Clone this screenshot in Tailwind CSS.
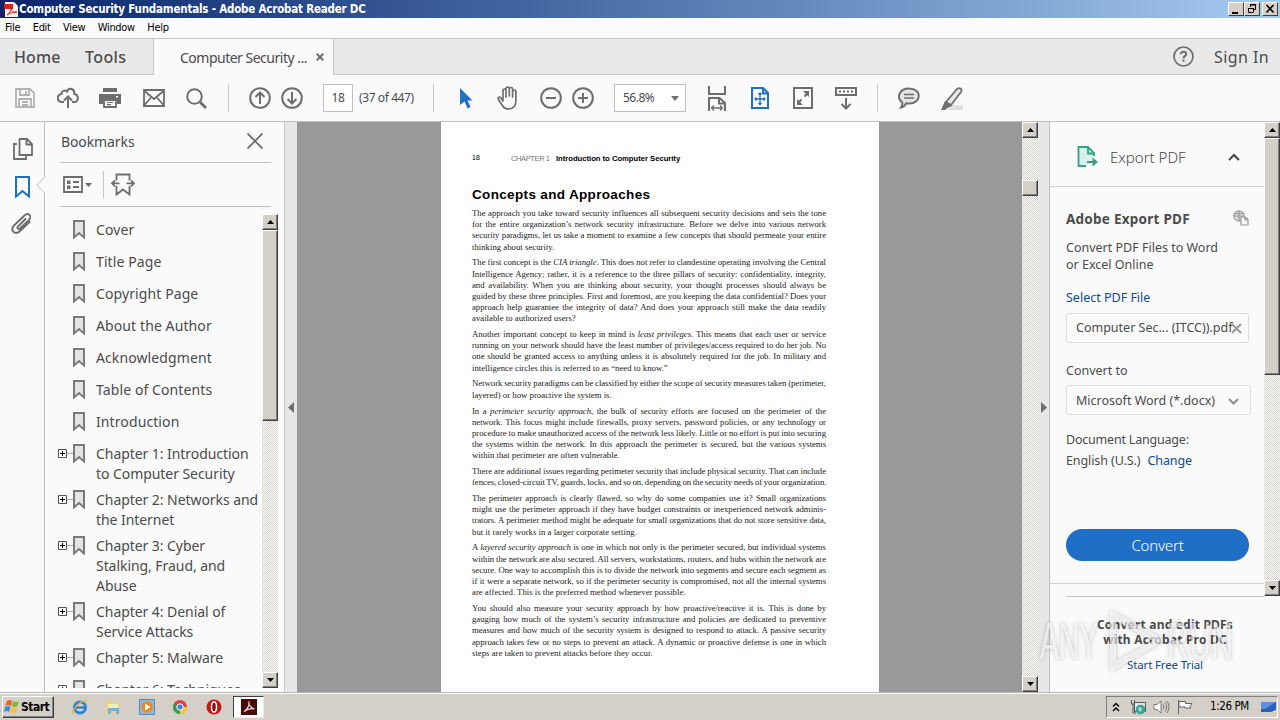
<!DOCTYPE html>
<html lang="en">
<head>
    <meta charset="UTF-8">
    <meta name="viewport" content="width=device-width, initial-scale=1.0">
    <title>Computer Security Fundamentals - Adobe Acrobat Reader DC</title>
    <script src="https://cdn.jsdelivr.net/npm/@tailwindcss/browser@4"></script>
</head>
<body class="w-[1280px] h-[720px] overflow-hidden flex flex-col bg-[#fafafa] font-['Noto_Sans',sans-serif] text-[#4b4b4b]">

    <!-- title bar -->
    <header class="h-[18px] shrink-0 flex items-center bg-linear-to-r from-[#0a246a] to-[#a6caf0] pl-1 pr-[2px]">
        <svg class="w-[14px] h-4" viewBox="0 0 14 16"><path d="M1 1h9l4 4v11H1z" fill="#f4f0f0"/><path d="M0 3h9v5H0z" fill="#d8201c"/><path d="M3 14c3-2 5-6 4-8 0 4 3 6 6 5-4 0-7 1-10 3z" fill="none" stroke="#d8201c"/></svg>
        <h1 class="ml-[1px] text-[11.5px] leading-[18px] font-bold text-white font-['DejaVu_Sans_Condensed','DejaVu_Sans',sans-serif] tracking-[-0.2px]">Computer Security Fundamentals - Adobe Acrobat Reader DC</h1>
        <div class="ml-auto flex">
            <div class="w-4 h-[14px] bg-[#d4d0c8] border border-t-white border-l-white border-b-[#404040] border-r-[#404040]"><svg class="block" width="14" height="12"><path d="M3 9h6v2H3z"/></svg></div>
            <div class="w-4 h-[14px] bg-[#d4d0c8] border border-t-white border-l-white border-b-[#404040] border-r-[#404040]"><svg class="block" width="14" height="12" fill="none" stroke="#000"><path d="M5.500 4V1.500h5v5H9M5 2h6M3.500 5.500h5v4h-5zM3 5.500h6"/></svg></div>
            <div class="ml-[2px] w-4 h-[14px] bg-[#d4d0c8] border border-t-white border-l-white border-b-[#404040] border-r-[#404040]"><svg class="block" width="14" height="12" stroke="#000" stroke-width="1.600"><path d="M3.500 2l7 7.500M10.500 2l-7 7.500"/></svg></div>
        </div>
    </header>

    <nav class="h-[20px] shrink-0 flex items-center gap-[12.400px] pl-[5px] pt-px bg-[#fbfbfb] text-black text-[11px] font-['DejaVu_Sans_Condensed','DejaVu_Sans',sans-serif] tracking-[-0.3px]">
        <span>File</span><span>Edit</span><span>View</span><span>Window</span><span>Help</span>
    </nav>

    <!-- tabs -->
    <div class="h-[37px] shrink-0 flex items-stretch bg-[#e9e9e9] border-t border-[#c6c6c6] text-[16px]">
        <div class="w-[154px] flex items-center border-r border-b border-[#c6c6c6] pl-[14px] font-medium">
            <span class="w-[71px] tracking-[0.1px]">Home</span>
            <span class="tracking-[0.4px]">Tools</span>
        </div>
        <div class="w-[179px] flex items-center bg-[#fafafa] pl-[26px] text-[14px]">
            <span class="w-[136px] whitespace-nowrap tracking-[-0.5px]">Computer Security ...</span>
            <svg width="8" height="8" stroke="#6e6e6e" stroke-width="2"><path d="M.7.7l6.600 6.600M7.300.7L.7 7.300"/></svg>
        </div>
        <div class="flex-1 flex items-center justify-end border-l border-b border-[#c6c6c6] pr-[11px]">
            <svg class="mr-5" width="21" height="21" fill="none" stroke="#6e6e6e" stroke-width="1.700"><circle cx="10.500" cy="10.500" r="9.500"/><path d="M7.800 8.300c0-3.600 5.600-3.300 5.400-.2-.1 1.700-2.700 2-2.700 4.300M10.500 13.800v2" stroke-width="2"/></svg>
            <span class="tracking-[0.4px]">Sign In</span>
        </div>
    </div>

    <!-- toolbar -->
    <div class="h-[47px] shrink-0 flex items-center border-b border-[#c0c0c0] text-[12px] text-[#4b4b4b]">
        <svg class="ml-[15px]" width="20" height="20" fill="none" stroke="#b3b3b3" stroke-width="1.800"><path d="M1 1h14l4 4v14H1zM5 1v6h9V1M11 3v3M4 19v-8h12v8M7 14h6M7 17h6"/></svg>
        <svg class="ml-[22px]" width="22" height="22" fill="none" stroke="#6e6e6e" stroke-width="2"><path d="M7 15H5a4 4 0 0 1-.5-8C4.500 4 8 2.500 10 4.500 12-.5 18 2 17.300 7c4.700.5 4.700 8-.3 8h-2M11 21V10M7 13.500l4-4 4 4"/></svg>
        <svg class="ml-5" width="22" height="22"><path d="M4 1h14v4H4zM0 7h22v10h-4v-4H4v4H0z" fill="#6e6e6e"/><path d="M5 13h12v7H5z" fill="#fafafa" stroke="#6e6e6e" stroke-width="1.800"/><path d="M8 15.500h6M8 17.700h4" stroke="#6e6e6e" stroke-width="1.200"/><path d="M17 9h2v1.500h-2z" fill="#fff"/></svg>
        <svg class="ml-[22px]" width="22" height="18" fill="none" stroke="#6e6e6e" stroke-width="1.800"><path d="M1 1h20v16H1zM1.500 2l9.500 8 9.500-8M1.500 16l7-8M20.500 16l-7-8"/></svg>
        <svg class="ml-[21px]" width="21" height="21" fill="none" stroke="#6e6e6e" stroke-width="2"><circle cx="8.500" cy="8.500" r="7.300"/><path d="M14 14l6 6" stroke-width="2.800"/></svg>
        <div class="ml-[21px] w-px h-7 bg-[#c8c8c8]"></div>
        <svg class="ml-5" width="22" height="22" fill="none" stroke="#6e6e6e" stroke-width="2"><circle cx="11" cy="11" r="9.800"/><path d="M11 17V6M6.500 10L11 5.500l4.500 4.500"/></svg>
        <svg class="ml-[10px]" width="22" height="22" fill="none" stroke="#6e6e6e" stroke-width="2"><circle cx="11" cy="11" r="9.800"/><path d="M11 5v11M6.500 12l4.500 4.500 4.500-4.500"/></svg>
        <div class="ml-5 w-[30px] h-7 flex items-center justify-center border border-[#c0c0c0] bg-white tracking-[-0.4px]">18</div>
        <span class="ml-[6px] w-[56px] whitespace-nowrap tracking-[-0.400px]">(37 of 447)</span>
        <div class="ml-[18px] w-px h-7 bg-[#c8c8c8]"></div>
        <svg class="ml-[26px]" width="13" height="21"><path d="M0 0l12.500 12.500H7.600l3 6.500-3 1.500-3-7L0 17z" fill="#1f6fc6"/></svg>
        <svg class="ml-[24px]" width="23" height="24" fill="none" stroke="#6e6e6e" stroke-width="1.700" stroke-linecap="round"><path d="M6 14V4.500c0-2 3-2 3 0V11M9 10V2.500c0-2 3.300-2 3.300 0V10M12.300 10V3c0-2 3.300-2 3.300 0v8M15.600 10V5.500c0-2 3.300-2 3.300 0V15c0 5-3 8-7.500 8-3.400 0-5-1.500-6.400-4L1.500 13.500c-1-2 1-3.300 2.500-1.500l2 3"/></svg>
        <svg class="ml-5" width="22" height="22" fill="none" stroke="#6e6e6e" stroke-width="2"><circle cx="11" cy="11" r="9.800"/><path d="M6 11h10"/></svg>
        <svg class="ml-[10px]" width="22" height="22" fill="none" stroke="#6e6e6e" stroke-width="2"><circle cx="11" cy="11" r="9.800"/><path d="M6 11h10M11 6v10"/></svg>
        <div class="ml-5 w-[72px] h-7 flex items-center border border-[#c0c0c0] bg-white pl-2">
            <span class="w-[48px] tracking-[-0.5px]">56.8%</span>
            <svg width="8" height="5"><path d="M0 0h8L4 5z" fill="#6e6e6e"/></svg>
        </div>
        <svg class="ml-[21px]" width="20" height="25" fill="none" stroke="#6e6e6e" stroke-width="2"><path d="M2 0v8h16V0M2 25V12h10.500l5.500 5v8M12 12v5.500h6"/><path d="M4.500 22h11M7 19.500L4.500 22 7 24.500M13 19.500l2.500 2.500-2.500 2.500" stroke-width="1.300"/></svg>
        <svg class="ml-6" width="18" height="22" fill="none" stroke="#1f6fc6" stroke-width="2"><path d="M1 1h11l5 5v15H1zM12 1v5.500h5"/><path d="M9 6v11M4 12h10M7.500 7.500L9 6l1.500 1.500M7.500 16L9 17.500l1.500-1.500M5.500 10.500L4 12l1.500 1.500M12.500 10.500L14 12l-1.500 1.500" stroke-width="1.300"/></svg>
        <svg class="ml-6" width="20" height="22" fill="none" stroke="#6e6e6e" stroke-width="2"><path d="M1 1h18v20H1zM11.500 9.500L15 6M8.500 12.500L5 16"/><path d="M10 4h6v6zM4 12v6h6z" fill="#6e6e6e" stroke="none"/></svg>
        <svg class="ml-[22px]" width="22" height="23" fill="none" stroke="#6e6e6e" stroke-width="2"><path d="M1 1h20v7H1zM11 11v10M6.500 17l4.500 4.500 4.500-4.500"/><path d="M4 4.500h14" stroke-dasharray="2 2"/></svg>
        <div class="ml-[20px] w-px h-7 bg-[#c8c8c8]"></div>
        <svg class="ml-5" width="22" height="22" fill="#e4e4e4" stroke="#6e6e6e" stroke-width="2"><path d="M11 1.500c13 0 13 15 0 15-1 0-2 0-3-.2C7 18.500 5.500 20 3 20.500c1.200-1.700 1.500-3 1.300-5C-2 11 1 1.500 11 1.500z"/><path d="M6 7.500h10M6 11h10" stroke-width="1.300"/></svg>
        <svg class="ml-5" width="24" height="23" fill="none"><path d="M9 18h14v5H7z" fill="#e0e0e0"/><path d="M6 15L17 2c2-2 6 0 4 3L11 18z" fill="#e8e8e8" stroke="#6e6e6e" stroke-width="1.800"/><path d="M5 14l7 5-4 1.500L5 23H1z" fill="#6e6e6e"/></svg>
    </div>

    <main class="h-[570px] shrink-0 flex">

        <!-- side icons -->
        <aside class="relative w-[45px] shrink-0 flex flex-col items-center border-r border-[#c0c0c0] pt-[16px]">
            <svg class="ml-[2px]" width="21" height="22" fill="none" stroke="#6e6e6e" stroke-width="1.800"><path d="M6.500 1H14l5 5v11H6.500zM13.500 1v5.500H19M4 6H1v15h12v-3"/></svg>
            <svg class="mt-[16px]" width="15" height="22" fill="none" stroke="#1f6fc6" stroke-width="2"><path d="M1 1h13v19.500L7.500 15 1 20.500z"/></svg>
            <svg class="mt-[15px] mr-[2px]" width="20" height="21" fill="none" stroke="#6e6e6e" stroke-width="1.900" stroke-linecap="round"><path d="M14.500 6L7 13.500c-1.500 1.500.5 3.500 2 2L18 7c4-4-1-8-4.500-4.500L3 12.500c-5 5 1.500 10 6 5.500L18.500 9"/></svg>
            <svg class="absolute right-[-1px] top-[55px]" width="9" height="16"><path d="M9 0v16L1 8z" fill="#fafafa"/><path d="M8.500 0L1 8l7.500 8" fill="none" stroke="#c0c0c0"/></svg>
        </aside>

        <!-- bookmarks -->
        <section class="w-[239px] shrink-0 flex flex-col pl-[15px] text-[14px]">
            <div class="h-[41px] w-[211px] flex items-center justify-between border-b border-[#c0c0c0] pr-[8px] pb-[2px]">
                <h2 class="ml-px tracking-[-0.1px]">Bookmarks</h2>
                <svg width="16" height="16" stroke="#6e6e6e" stroke-width="1.800"><path d="M.5.5l15 15M15.500.5l-15 15"/></svg>
            </div>
            <div class="h-[44px] w-[211px] flex items-center border-b border-[#c0c0c0] pl-[3px]">
                <svg width="20" height="17" fill="none" stroke="#6e6e6e" stroke-width="1.800"><path d="M1 1h18v15H1zM10 6h6M10 11h6"/><path d="M4 4.500h3.500V8H4zM4 9.500h3.500V13H4z" fill="#6e6e6e" stroke="none"/></svg>
                <svg class="ml-[2px]" width="7" height="4"><path d="M0 0h7L3.500 4z" fill="#6e6e6e"/></svg>
                <div class="ml-[11px] w-px h-7 bg-[#c8c8c8]"></div>
                <svg class="ml-[7px]" width="24" height="23" fill="none" stroke="#6e6e6e" stroke-width="1.800"><path d="M5.500 7.500V1.500h13v6M5.500 13v8.500l6.500-5 6.500 5V13M8.500 10.300H1.500M15.500 10.300h7M4 7.300L1 10.300l3 3M20 7.300l3 3-3 3"/></svg>
            </div>
            <div class="-ml-[3px] mt-[7px] h-[474px] flex overflow-hidden">
                <ul id="bookmarks" class="w-[205px] shrink-0 overflow-hidden pt-[6px]"></ul>
                <div class="w-4 flex flex-col bg-[repeating-conic-gradient(#fff_0_25%,#d4d0c8_0_50%)] bg-[length:2px_2px]">
                    <div class="h-4 flex items-center justify-center bg-[#d4d0c8] border border-t-white border-l-white border-b-[#404040] border-r-[#404040] shadow-[inset_-1px_-1px_#808080]"><svg width="7" height="4"><path d="M0 4h7L3.500 0z"/></svg></div>
                    <div class="h-[191px] bg-[#d4d0c8] border border-t-white border-l-white border-b-[#404040] border-r-[#404040] shadow-[inset_-1px_-1px_#808080]"></div>
                    <div class="mt-auto h-4 flex items-center justify-center bg-[#d4d0c8] border border-t-white border-l-white border-b-[#404040] border-r-[#404040] shadow-[inset_-1px_-1px_#808080]"><svg width="7" height="4"><path d="M0 0h7L3.500 4z"/></svg></div>
                </div>
            </div>
        </section>

        <div class="w-[13px] shrink-0 flex items-center justify-center bg-[#e6e8e8] border-l border-[#c8c8c8]">
            <svg width="6" height="11"><path d="M6 0v11L0 5.500z" fill="#6e6e6e"/></svg>
        </div>

        <!-- document -->
        <section class="w-[725px] shrink-0 bg-[#999999] pl-[144px]">
            <article class="w-[438px] h-full bg-white overflow-hidden pl-[31px] text-[#1c1c1c] font-['Liberation_Serif',serif]">
                <div class="mt-[31px] h-[11px] flex items-center font-['Liberation_Sans',sans-serif] text-[7.7px] text-black whitespace-nowrap">
                    <span class="w-[39px] text-[7px]">18</span>
                    <span class="w-[45px] text-[#777] tracking-[-0.5px]">CHAPTER 1</span>
                    <b class="tracking-[-0.03px]">Introduction to Computer Security</b>
                </div>
                <h2 class="mt-[21px] h-[20px] leading-[20px] text-[13.5px] font-bold text-black font-['Liberation_Sans',sans-serif] tracking-[0.34px]">Concepts and Approaches</h2>
                <div id="page" class="mt-[3px] w-[354px] text-[8.75px] leading-[11.17px] whitespace-nowrap"></div>
            </article>
        </section>

        <div class="w-4 shrink-0 flex flex-col bg-[repeating-conic-gradient(#fff_0_25%,#d4d0c8_0_50%)] bg-[length:2px_2px]">
            <div class="h-4 flex items-center justify-center bg-[#d4d0c8] border border-t-white border-l-white border-b-[#404040] border-r-[#404040] shadow-[inset_-1px_-1px_#808080]"><svg width="7" height="4"><path d="M0 4h7L3.500 0z"/></svg></div>
            <div class="mt-[42px] h-4 bg-[#d4d0c8] border border-t-white border-l-white border-b-[#404040] border-r-[#404040] shadow-[inset_-1px_-1px_#808080]"></div>
            <div class="mt-auto h-4 flex items-center justify-center bg-[#d4d0c8] border border-t-white border-l-white border-b-[#404040] border-r-[#404040] shadow-[inset_-1px_-1px_#808080]"><svg width="7" height="4"><path d="M0 0h7L3.500 4z"/></svg></div>
        </div>

        <div class="w-3 shrink-0 flex items-center justify-center bg-[#e6e8e8] border-r border-[#c0c0c0]">
            <svg width="6" height="11"><path d="M0 0v11l6-5.500z" fill="#6e6e6e"/></svg>
        </div>

        <!-- export pane -->
        <aside class="w-[230px] shrink-0 flex flex-col text-[12.5px]">
            <div class="h-[474px] flex">
                <div class="w-[214px] h-[462px] flex flex-col border-b border-[#d0d0d0]">
                    <div class="h-[65px] flex items-center border-b border-[#d0d0d0] pl-[27px] pt-[6px]">
                        <svg width="21" height="22" fill="none" stroke="#2ea385" stroke-width="1.800"><path d="M9 20H1.500V1H11l6 6v3" fill="#d9efe9"/><path d="M11 1v6.500h6M10 16h8"/><path d="M15.500 11.500v9L21 16z" fill="#2ea385" stroke="none"/></svg>
                        <span class="ml-[12px] text-[15px] font-light">Export PDF</span>
                        <svg class="ml-auto mr-[24px]" width="12" height="8" fill="none" stroke="#4b4b4b" stroke-width="2.200"><path d="M1 7l5-5 5 5"/></svg>
                    </div>
                    <div class="flex flex-col pl-4 pr-[15px]">
                        <div class="mt-[22px] h-5 flex items-center justify-between">
                            <b class="text-[13.5px] tracking-[0.250px]">Adobe Export PDF</b>
                            <svg class="mb-[3px]" width="16" height="16" fill="none" stroke="#999" stroke-width="1.200"><circle cx="6" cy="6" r="5.200" fill="#ddd"/><path d="M1 6h10M6 1v10M2 3.500h8"/><path d="M8 7h4.500L15 9.500V15H8zM12 7v3h3" fill="#fafafa"/></svg>
                        </div>
                        <p class="mt-[10px] leading-[17px]">Convert PDF Files to Word<br>or Excel Online</p>
                        <a class="mt-4 leading-[17px] text-[#0d4a8c]">Select PDF File</a>
                        <div class="mt-[7px] w-[183px] h-[30px] flex items-center border border-[#dcdcdc] rounded-[3px] pl-[9px] pt-px whitespace-nowrap">
                            <span class="w-[155px]">Computer Sec... (ITCC)).pdf</span>
                            <svg class="shrink-0" width="11" height="11" stroke="#999" stroke-width="2"><path d="M1 1l9 9M10 1l-9 9"/></svg>
                        </div>
                        <span class="mt-[19px] leading-[17px]">Convert to</span>
                        <div class="mt-[6px] w-[185px] h-[30px] flex items-center border border-[#dcdcdc] rounded-[3px] pl-[9px] pt-[2px] whitespace-nowrap">
                            <span class="w-[152px]">Microsoft Word (*.docx)</span>
                            <svg class="shrink-0" width="11" height="7" fill="none" stroke="#8e8e8e" stroke-width="2"><path d="M1 1l4.500 4.500L10 1"/></svg>
                        </div>
                        <span class="mt-[16px] leading-[17px] tracking-[-0.200px]">Document Language:</span>
                        <span class="mt-[4px] leading-[17px] tracking-[-0.100px]">English (U.S.) <a class="ml-1 text-[#0d4a8c]">Change</a></span>
                        <button class="mt-[60px] w-[183px] h-8 rounded-full bg-[#1f6fc6] text-white text-[15px] font-light tracking-[-0.200px]">Convert</button>
                    </div>
                </div>
                <div class="w-4 flex flex-col bg-[repeating-conic-gradient(#fff_0_25%,#d4d0c8_0_50%)] bg-[length:2px_2px]">
                    <div class="h-4 flex items-center justify-center bg-[#d4d0c8] border border-t-white border-l-white border-b-[#404040] border-r-[#404040] shadow-[inset_-1px_-1px_#808080]"><svg width="7" height="4"><path d="M0 4h7L3.500 0z"/></svg></div>
                    <div class="h-[237px] bg-[#d4d0c8] border border-t-white border-l-white border-b-[#404040] border-r-[#404040] shadow-[inset_-1px_-1px_#808080]"></div>
                    <div class="mt-auto h-4 flex items-center justify-center bg-[#d4d0c8] border border-t-white border-l-white border-b-[#404040] border-r-[#404040] shadow-[inset_-1px_-1px_#808080]"><svg width="7" height="4"><path d="M0 0h7L3.500 4z"/></svg></div>
                </div>
            </div>
            <div class="flex-1 flex flex-col items-center text-center">
                <div class="self-start ml-4 w-[198px] h-px bg-[#c0c0c0]"></div>
                <p class="mt-[20px] font-bold text-[12px] leading-[15px] tracking-[0.2px]">Convert and edit PDFs<br>with Acrobat Pro DC</p>
                <a class="mt-[9px] text-[11.5px] leading-[17px] tracking-[-0.150px] text-[#0d4a8c]">Start Free Trial</a>
            </div>
        </aside>
    </main>

    <!-- taskbar -->
    <footer class="h-[28px] shrink-0 flex items-center bg-[#d4d0c8] border-t border-[#b8b8b8] shadow-[inset_0_1px_#fff] pl-[2px] pt-px text-black font-['DejaVu_Sans_Condensed','DejaVu_Sans',sans-serif]">
        <div class="w-[52px] h-[22px] flex items-center border border-t-white border-l-white border-b-[#404040] border-r-[#404040] shadow-[inset_-1px_-1px_#808080] pl-px">
            <svg width="16" height="16" viewBox="0 0 16 16"><path d="M3 2q3-2 5 0L7 7Q4 5 1 7z" fill="#e8622c"/><path d="M9 2q3 2 6 0l-1.500 5Q11 9 8 7z" fill="#7cb83a"/><path d="M1 8q3-2 5.500 0L5 13Q3 11 0 13z" fill="#3c8ad8"/><path d="M7.500 8q3 2 6 0L12 13q-3 2-6 0z" fill="#f6c02c"/></svg>
            <b class="ml-px text-[12px] tracking-[-0.5px]">Start</b>
        </div>
        <svg class="ml-[18px]" width="16" height="16" fill="none"><circle cx="8" cy="8.500" r="5.500" stroke="#2a86dc" stroke-width="3"/><path d="M4 8.500h9" stroke="#2a6ec0" stroke-width="2"/><path d="M1 15C-1 10 12-1 15 2" stroke="#e8b830" stroke-width="1.300"/></svg>
        <svg class="ml-[17px]" width="16" height="16"><path d="M1 2h6l1 2h7v10H1z" fill="#f0d070"/><path d="M3 5h10v4H3z" fill="#fbf0b4"/><path d="M3 9h11v6h-3v-3H6v3H3z" fill="#6cb4dc"/></svg>
        <svg class="ml-[18px]" width="16" height="16"><path d="M.5.5h15v15H.5z" fill="#8cb8e4" stroke="#5488c0"/><circle cx="8" cy="8" r="5.800" fill="#f08818"/><path d="M6 4.500v7L11.500 8z" fill="#fff"/></svg>
        <svg class="ml-[18px]" width="14" height="14" viewBox="0 0 14 14"><circle cx="7" cy="7" r="7" fill="#e04438"/><path d="M7 7L.9 3.500A7 7 0 0 0 7 14z" fill="#34a050"/><path d="M7 7h7a7 7 0 0 1-7 7z" fill="#f8cc30"/><circle cx="7" cy="7" r="3.200" fill="#3c80e8" stroke="#fff"/></svg>
        <svg class="ml-[19px]" width="16" height="16"><circle cx="8" cy="8" r="7.500" fill="#c41818"/><ellipse cx="8" cy="8" rx="2.500" ry="5" fill="#8c0808" stroke="#fff" stroke-width="1.500"/></svg>
        <div class="ml-[11px] w-[31px] h-[22px] flex items-center justify-center bg-white border border-t-[#404040] border-l-[#404040] border-b-[#ececec] border-r-[#ececec]">
            <svg width="16" height="16"><path d="M0 0h16v16H0z" fill="#4a0808"/><path d="M3 12.500c3-1.500 6-7 5-9.500-1 2 1.500 6 5.500 7-4-1-8 .5-10.500 2.500z" fill="none" stroke="#f0e0e0" stroke-width="1.100"/></svg>
        </div>
        <div class="ml-auto mr-[2px] w-[172px] h-[22px] flex items-center border border-t-[#808080] border-l-[#808080] border-b-white border-r-white">
            <svg class="ml-[5px]" width="8" height="10" fill="none" stroke="#000" stroke-width="1.400"><path d="M1 4.500l3-3 3 3M1 9l3-3 3 3"/></svg>
            <svg class="ml-[10px]" width="16" height="16" fill="none"><path d="M4.500 3.500h11v9h-11z" fill="#e8e8e8" stroke="#555"/><path d="M1.500 1v4h3V1M3 5v9h3" stroke="#555"/><circle cx="10.500" cy="10.500" r="4.800" fill="#38a89c"/><path d="M8 9l3-1 1 3-2 2z" fill="#b0e0c8"/></svg>
            <svg class="ml-[7px]" width="17" height="14" fill="none" stroke="#777"><path d="M1 4.500h3L8 1v12L4 9.500H1z" fill="#fff"/><path d="M10 4.500q2 2.500 0 5M12 2.500q3.500 4.500 0 9M14 1q4 6 0 12"/></svg>
            <svg class="ml-[7px]" width="16" height="16" fill="#fff" stroke="#666"><path d="M1.500 1v14M2 2.500h6.500v2H15l-2 3 1 1.500H8V8H2z"/></svg>
            <span class="ml-[17px] w-[51px] text-[11.5px] tracking-[-0.4px] whitespace-nowrap">1:26 PM</span>
            <svg class="shrink-0" width="15" height="12"><path d="M0 1h15v10H0z" fill="#2a60bc"/><path d="M0 1h15L4 8H0z" fill="#5c90dc"/><path d="M10 11h5V9z" fill="#dce8f8"/></svg>
        </div>
    </footer>

    <!-- watermark -->
    <div class="absolute left-[1040px] top-[608px] w-[196px] h-[64px]">
        <svg class="overflow-visible drop-shadow-[0_0_2px_rgba(0,0,0,0.35)]" width="196" height="64" fill="#fff" fill-opacity=".62" font-family="Liberation Sans, sans-serif" font-size="51">
            <text x="0" y="51" textLength="58" lengthAdjust="spacingAndGlyphs">ANY</text>
            <path d="M70 6q0-5 5-2l45 25q5 3 0 6L75 62q-5 3-5-2zm6 7v40l37-20z" fill-rule="evenodd"/>
            <text x="127" y="51" textLength="66" lengthAdjust="spacingAndGlyphs">RUN</text>
        </svg>
    </div>

    <script>
        var bookmarks = [
            'Cover', 'Title Page', 'Copyright Page', 'About the Author', 'Acknowledgment', 'Table of Contents', 'Introduction',
            'Chapter 1: Introduction|to Computer Security', 'Chapter 2: Networks and|the Internet',
            'Chapter 3: Cyber|Stalking, Fraud, and|Abuse', 'Chapter 4: Denial of|Service Attacks',
            'Chapter 5: Malware', 'Chapter 6: Techniques'
        ];
        document.getElementById('bookmarks').innerHTML = bookmarks.map(function (b) {
            var lines = b.split('|');
            var chapter = b.startsWith('Chapter');
            var plus = chapter
                ? '<svg class="mt-[5px] ml-px shrink-0" width="15" height="9" fill="none" stroke="#555"><path d="M.5.500h8v8h-8z" fill="#fff"/><path d="M2 4.500h5M4.500 2v5" stroke="#000"/><path d="M9 4.500h6" stroke="#aaa"/></svg>'
                : '<span class="w-4"></span>';
            return '<li class="flex whitespace-nowrap leading-[20px] ' + (chapter ? 'tracking-[-0.06px] ' : 'tracking-[0.1px] ') + (lines.length > 1 ? 'pb-[6px]' : 'pb-[12px]') + '">' + plus +
                '<svg class="w-3 h-[19px] mr-[11px] shrink-0" fill="#e4e4e4" stroke="#7a7a7a" stroke-width="2"><path d="M1 1h10v16.500L6 13l-5 4.500z"/></svg>' +
                '<span>' + lines.join('<br>') + '</span></li>';
        }).join('');

        var paragraphs = [
            ['The approach you take toward security influences all subsequent security decisions and sets the tone', 'for the entire organization’s network security infrastructure. Before we delve into various network', 'security paradigms, let us take a moment to examine a few concepts that should permeate your entire', 'thinking about security.'],
            ['The first concept is the <i>CIA triangle</i>. This does not refer to clandestine operating involving the Central', 'Intelligence Agency; rather, it is a reference to the three pillars of security: confidentiality, integrity,', 'and availability. When you are thinking about security, your thought processes should always be', 'guided by these three principles. First and foremost, are you keeping the data confidential? Does your', 'approach help guarantee the integrity of data? And does your approach still make the data readily', 'available to authorized users?'],
            ['Another important concept to keep in mind is <i>least privileges</i>. This means that each user or service', 'running on your network should have the least number of privileges/access required to do her job. No', 'one should be granted access to anything unless it is absolutely required for the job. In military and', 'intelligence circles this is referred to as “need to know.”'],
            ['Network security paradigms can be classified by either the scope of security measures taken (perimeter,', 'layered) or how proactive the system is.'],
            ['In a <i>perimeter security approach</i>, the bulk of security efforts are focused on the perimeter of the', 'network. This focus might include firewalls, proxy servers, password policies, or any technology or', 'procedure to make unauthorized access of the network less likely. Little or no effort is put into securing', 'the systems within the network. In this approach the perimeter is secured, but the various systems', 'within that perimeter are often vulnerable.'],
            ['There are additional issues regarding perimeter security that include physical security. That can include', 'fences, closed-circuit TV, guards, locks, and so on, depending on the security needs of your organization.'],
            ['The perimeter approach is clearly flawed, so why do some companies use it? Small organizations', 'might use the perimeter approach if they have budget constraints or inexperienced network adminis-', 'trators. A perimeter method might be adequate for small organizations that do not store sensitive data,', 'but it rarely works in a larger corporate setting.'],
            ['A <i>layered security approach</i> is one in which not only is the perimeter secured, but individual systems', 'within the network are also secured. All servers, workstations, routers, and hubs within the network are', 'secure. One way to accomplish this is to divide the network into segments and secure each segment as', 'if it were a separate network, so if the perimeter security is compromised, not all the internal systems', 'are affected. This is the preferred method whenever possible.'],
            ['You should also measure your security approach by how proactive/reactive it is. This is done by', 'gauging how much of the system’s security infrastructure and policies are dedicated to preventive', 'measures and how much of the security system is designed to respond to attack. A passive security', 'approach takes few or no steps to prevent an attack. A dynamic or proactive defense is one in which', 'steps are taken to prevent attacks before they occur.']
        ];
        // every line but the short last one of a paragraph is set to full measure
        document.getElementById('page').innerHTML = paragraphs.map(function (lines) {
            return '<p class="mb-[4.7px]">' + lines.map(function (line, i) {
                var full = i < lines.length - 1 || line.length > 90;
                return '<span class="block ' + (full ? 'text-justify [text-align-last:justify] tracking-[-0.04px] [word-spacing:-0.6px]' : '') + '">' + line + '</span>';
            }).join('') + '</p>';
        }).join('');
    </script>
</body>
</html>
